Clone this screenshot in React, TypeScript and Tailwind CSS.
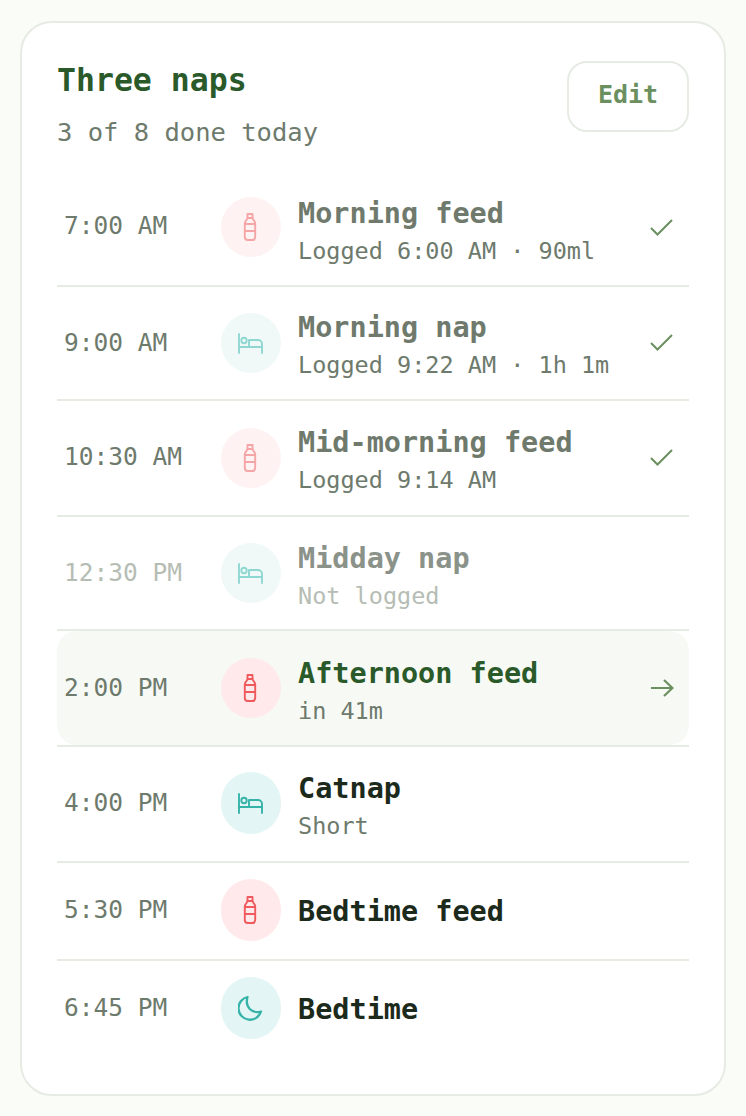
const mono = "font-['DejaVu_Sans_Mono','Liberation_Mono',monospace]";

function Bottle({ className }: { className: string }) {
  return (
    <svg width="24" height="32" viewBox="1 0 24 32" fill="none" stroke="currentColor" strokeWidth="1.900" strokeLinecap="round" strokeLinejoin="round" className={className}>
      <path d="M9.500 3h5v4h-5z" />
      <path d="M9.500 7C9.500 9 6.800 9.500 6.800 12.500V26a3 3 0 0 0 3 3h4.400a3 3 0 0 0 3-3V12.500C17.200 9.500 14.500 9 14.500 7" />
      <path d="M6.800 13h10.400M6.800 20h10.400" />
    </svg>
  );
}
function Bed({ className }: { className: string }) {
  return (
    <svg width="28" height="24" viewBox="0 0 28 24" fill="none" stroke="currentColor" strokeWidth="1.900" strokeLinecap="round" strokeLinejoin="round" className={className}>
      <path d="M2 3v19" />
      <path d="M2 16h23" />
      <path d="M25 22v-9a4 4 0 0 0-4-4H12v7" />
      <circle cx="7" cy="9.500" r="2.700" />
    </svg>
  );
}
function Moon({ className }: { className: string }) {
  return (
    <svg width="26" height="26" viewBox="0 0 26 26" fill="none" stroke="currentColor" strokeWidth="2.300" strokeLinecap="round" strokeLinejoin="round" className={className}>
      <path d="M9.500 2A11.500 11.500 0 1 0 23 16.500C14 19 6.500 12 9.500 2Z" />
    </svg>
  );
}
function Check({ shift }: { shift: string }) {
  return (
    <svg width="23" height="17" viewBox="0 0 23 17" fill="none" stroke="#6b8f5e" strokeWidth="2" className={`shrink-0 mr-[2px] ${shift}`}>
      <path d="M1 9l6.500 6.500L22 1" />
    </svg>
  );
}
function Arrow() {
  return (
    <svg width="24" height="18" viewBox="0 0 24 18" fill="none" stroke="#6b8f5e" strokeWidth="2.200" className="shrink-0 mr-[1px]">
      <path d="M1 9h21M14 1l8.500 8L14 17" />
    </svg>
  );
}

type Row = {
  time: string;
  name: string;
  sub?: string;
  icon: "bottle" | "bed" | "moon";
  state: "done" | "missed" | "next" | "todo";
  h: string;
  textPad: string;
  tall?: boolean;
};

const rows: Row[] = [
  { time: "7:00 AM", name: "Morning feed", sub: "Logged 6:00 AM · 90ml", icon: "bottle", state: "done", h: "h-[115px] pb-[4px]", textPad: "pt-[9px]" },
  { time: "9:00 AM", name: "Morning nap", sub: "Logged 9:22 AM · 1h 1m", icon: "bed", state: "done", h: "h-[114px]", textPad: "pt-[4px]" },
  { time: "10:30 AM", name: "Mid-morning feed", sub: "Logged 9:14 AM", icon: "bottle", state: "done", h: "h-[116px] pb-[1px]", textPad: "pt-[6px]" },
  { time: "12:30 PM", name: "Midday nap", sub: "Not logged", icon: "bed", state: "missed", h: "h-[114px]", textPad: "pt-[6px]" },
  { time: "2:00 PM", name: "Afternoon feed", sub: "in 41m", icon: "bottle", state: "next", h: "h-[116px]", textPad: "pt-[6px]" },
  { time: "4:00 PM", name: "Catnap", sub: "Short", icon: "bed", state: "todo", h: "h-[116px] pb-[2px]", textPad: "pt-[6px]", tall: true },
  { time: "5:30 PM", name: "Bedtime feed", icon: "bottle", state: "todo", h: "h-[98px] pb-[2px]", textPad: "pt-[3px]", tall: true },
  { time: "6:45 PM", name: "Bedtime", icon: "moon", state: "todo", h: "h-[98px] pb-[4px]", textPad: "pt-[3px]", tall: true },
];

function Item({ row, last }: { row: Row; last: boolean }) {
  const faded = row.state === "done" || row.state === "missed";
  const isBottle = row.icon === "bottle";
  const circle = isBottle
    ? faded ? "bg-[#fff2f2]" : "bg-[#ffe9ea]"
    : faded ? "bg-[#f0f9f8]" : "bg-[#e3f5f4]";
  const iconColor = isBottle
    ? faded ? "text-[#f6a5a6]" : "text-[#ee5a5d]"
    : faded ? "text-[#8fd7d1]" : "text-[#35b3a9]";
  const timeColor = row.state === "missed" ? "text-[#b6bdb4]" : "text-[#6d7a6c]";
  const nameColor =
    row.state === "next" ? "text-[#2a5a2a]"
    : row.state === "missed" ? "text-[#8a9289]"
    : row.state === "done" ? "text-[#6f7a6d]"
    : "text-[#1c2a1c]";
  const subColor = row.state === "missed" ? "text-[#b6bdb4]" : "text-[#6d7a6c]";

  return (
    <div className={`${row.h} ${last ? "" : "border-b-2 border-[#e6ebe3]"} flex`}>
      <div className={`flex flex-1 items-center pl-[7px] pr-[14px] ${row.state === "next" ? "bg-[#f7f9f5] rounded-[20px]" : ""}`}>
        <div className={`w-[157px] shrink-0 text-[24.500px] ${timeColor}`}>{row.time}</div>
        <div className={`w-[60px] ${row.tall ? "h-[62px]" : "h-[60px]"} rounded-full shrink-0 flex items-center justify-center ${circle}`}>
          {row.icon === "bottle" && <Bottle className={iconColor} />}
          {row.icon === "bed" && <Bed className={iconColor} />}
          {row.icon === "moon" && <Moon className={iconColor} />}
        </div>
        <div className={`flex-1 ml-[17px] min-w-0 ${row.textPad}`}>
          <div className={`text-[28.500px] leading-[36px] font-bold whitespace-nowrap ${nameColor}`}>{row.name}</div>
          {row.sub && <div className={`text-[23.500px] leading-[32px] mt-[3px] whitespace-nowrap ${subColor}`}>{row.sub}</div>}
        </div>
        {row.state === "done" && <Check shift={row.time === "7:00 AM" ? "mt-[2px]" : "-mt-[1px]"} />}
        {row.state === "next" && <Arrow />}
      </div>
    </div>
  );
}

export default function App() {
  return (
    <div className={`${mono} bg-[#fafcf7] w-[746px] h-[1116px] pt-[21px] pl-[20px]`}>
      <div className="w-[706px] h-[1075px] bg-white border-2 border-[#e6ebe3] rounded-[32px] px-[35px] pt-[37px]">
        <div className="flex justify-between h-[112px]">
          <div>
            <div className="text-[31.500px] leading-[40px] font-bold text-[#2a5a2a]">Three naps</div>
            <div className="text-[25.500px] leading-[34px] mt-[15px] text-[#6d7a6c]">3 of 8 done today</div>
          </div>
          <div className="mt-[1px] w-[122px] h-[71px] pb-[4px] border-2 border-[#e6ebe3] rounded-[20px] flex items-center justify-center text-[25px] font-bold text-[#6b8f5e]">
            Edit
          </div>
        </div>
        <div>
          {rows.map((r, i) => (
            <Item key={r.time} row={r} last={i === rows.length - 1} />
          ))}
        </div>
      </div>
    </div>
  );
}
